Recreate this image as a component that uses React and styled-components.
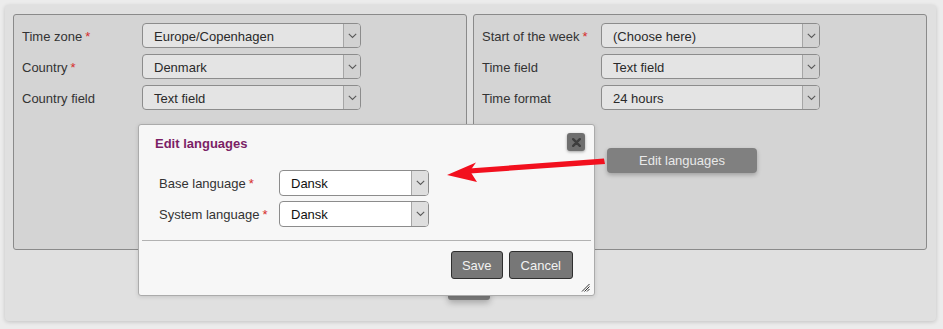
import React from "react";
import styled, { createGlobalStyle } from "styled-components";

const Global = createGlobalStyle`
  html, body { margin: 0; padding: 0; background: #ececec; }
  body { font-family: "Liberation Sans", Arial, sans-serif; font-size: 13px; color: #333; }
  * { box-sizing: border-box; }
`;

const Page = styled.div`
  position: relative;
  width: 943px;
  height: 329px;
  padding: 5px 0 0 5px;
`;

const Panel = styled.div`
  width: 931px;
  background: #e0e0e0;
  border-radius: 4px;
  box-shadow: 0 1px 4px rgba(0, 0, 0, 0.18);
  padding: 9px 10px 21px 8px;
`;

const Columns = styled.div`
  display: grid;
  grid-template-columns: 454px 454px;
  column-gap: 6px;
`;

const FieldBox = styled.div`
  height: 236px;
  background: #d4d4d4;
  border: 1px solid #8a8a8a;
  border-radius: 3px;
  padding: 8px;
  display: flex;
  flex-direction: column;
  gap: 6px;
`;

const Row = styled.div`
  display: grid;
  grid-template-columns: ${(p) => p.$labelWidth || 120}px auto;
  align-items: center;
  justify-content: start;
`;

const Label = styled.span`
  color: #333;
  font-size: 13px;
  white-space: nowrap;
  padding-top: 1px;
`;

const Req = styled.span`
  color: #d62d2d;
  margin-left: 3px;
`;

const SelectBox = styled.div`
  display: flex;
  width: ${(p) => p.$width}px;
  height: ${(p) => p.$height}px;
  border: 1px solid #8c8c8c;
  border-radius: 4px;
  background: ${(p) => (p.$light ? "#ffffff" : "#e4e4e4")};
  overflow: hidden;
`;

const SelectValue = styled.span`
  flex: 1;
  display: flex;
  align-items: center;
  padding-left: 11px;
  padding-top: 1px;
  color: ${(p) => (p.$light ? "#111" : "#2a2a2a")};
  font-size: 13px;
`;

const SelectArrow = styled.span`
  width: 17px;
  border-left: 1px solid #a6a6a6;
  background: ${(p) => (p.$light ? "#dedede" : "#d2d2d2")};
  display: flex;
  align-items: center;
  justify-content: center;
`;

const Chevron = () => (
  <svg width="9" height="6" viewBox="0 0 9 6">
    <polyline points="0.8,0.8 4.5,4.5 8.2,0.8" fill="none" stroke="#5a5a5a" strokeWidth="1.1" />
  </svg>
);

const Select = ({ value, width = 219, height = 25, light }) => (
  <SelectBox $width={width} $height={height} $light={light}>
    <SelectValue $light={light}>{value}</SelectValue>
    <SelectArrow $light={light}>
      <Chevron />
    </SelectArrow>
  </SelectBox>
);

const Field = ({ label, required, value, labelWidth, ...rest }) => (
  <Row $labelWidth={labelWidth}>
    <Label>
      {label}
      {required && <Req>*</Req>}
    </Label>
    <Select value={value} {...rest} />
  </Row>
);

const EditRow = styled.div`
  margin-top: 32px;
  padding-left: 125px;
`;

const GreyButton = styled.button`
  width: 150px;
  height: 25px;
  border: none;
  border-radius: 4px;
  background: #808080;
  color: #e9e9e9;
  font-family: "Liberation Sans", Arial, sans-serif;
  font-size: 13px;
  box-shadow: 0 2px 4px rgba(0, 0, 0, 0.25);
  padding: 0;
`;

const Footer = styled.div`
  display: flex;
  justify-content: center;
  margin-top: 24px;
  padding-right: 1px;
`;

const MainButton = styled.button`
  width: 42px;
  height: 26px;
  border: none;
  border-radius: 3px;
  background: #777;
  box-shadow: 0 3px 6px rgba(0, 0, 0, 0.25);
`;

const Dialog = styled.div`
  position: absolute;
  left: 138px;
  top: 124px;
  width: 457px;
  height: 172px;
  background: #f7f7f7;
  border: 1px solid #ababab;
  border-radius: 3px;
  box-shadow: 0 1px 4px rgba(0, 0, 0, 0.12);
  display: flex;
  flex-direction: column;
`;

const DialogHeader = styled.div`
  display: flex;
  justify-content: space-between;
  align-items: flex-start;
  padding: 10px 9px 0 16px;
  height: 45px;
`;

const DialogTitle = styled.h2`
  margin: 0;
  font-size: 13px;
  font-weight: bold;
  line-height: 16px;
  color: #7b1f66;
  padding-top: 1px;
`;

const CloseButton = styled.button`
  width: 18px;
  height: 18px;
  margin-top: -2px;
  border: none;
  border-radius: 3px;
  background: #6f6f6f;
  box-shadow: 0 1px 3px rgba(0, 0, 0, 0.35);
  display: flex;
  align-items: center;
  justify-content: center;
  padding: 0;
`;

const DialogBody = styled.div`
  padding: 0 0 0 20px;
  display: flex;
  flex-direction: column;
  gap: 5px;
  height: 70px;
`;

const Separator = styled.hr`
  margin: 0 3px;
  border: none;
  border-top: 1px solid #b2b2b2;
`;

const DialogFooter = styled.div`
  position: relative;
  flex: 1;
  display: flex;
  justify-content: flex-end;
  align-items: flex-start;
  gap: 6px;
  padding: 10px 21px 0 0;
`;

const DarkButton = styled.button`
  height: 28px;
  padding: 0 ${(p) => p.$pad}px;
  border: 1px solid #2f2f2f;
  border-radius: 3px;
  background: #777;
  color: #f2f2f2;
  font-family: "Liberation Sans", Arial, sans-serif;
  font-size: 13px;
`;

const Grip = styled.svg`
  position: absolute;
  right: 4px;
  bottom: 3px;
`;

const ArrowOverlay = styled.svg`
  position: absolute;
  left: 0;
  top: 0;
  pointer-events: none;
`;

export default function App() {
  return (
    <>
      <Global />
      <Page>
        <Panel>
          <Columns>
            <FieldBox>
              <Field label="Time zone" required value="Europe/Copenhagen" />
              <Field label="Country" required value="Denmark" />
              <Field label="Country field" value="Text field" />
            </FieldBox>
            <FieldBox>
              <Field label="Start of the week" required value="(Choose here)" labelWidth={119} />
              <Field label="Time field" value="Text field" labelWidth={119} />
              <Field label="Time format" value="24 hours" labelWidth={119} />
              <EditRow>
                <GreyButton>Edit languages</GreyButton>
              </EditRow>
            </FieldBox>
          </Columns>
          <Footer>
            <MainButton />
          </Footer>
        </Panel>

        <Dialog>
          <DialogHeader>
            <DialogTitle>Edit languages</DialogTitle>
            <CloseButton aria-label="close">
              <svg width="9" height="9" viewBox="0 0 9 9">
                <path d="M1.2 1.2 L7.8 7.8 M7.8 1.2 L1.2 7.8" stroke="#3e3e3e" strokeWidth="2.4" strokeLinecap="round" />
              </svg>
            </CloseButton>
          </DialogHeader>
          <DialogBody>
            <Field label="Base language" required value="Dansk" width={150} height={26} light />
            <Field label="System language" required value="Dansk" width={150} height={26} light />
          </DialogBody>
          <Separator />
          <DialogFooter>
            <DarkButton $pad={10}>Save</DarkButton>
            <DarkButton $pad={11}>Cancel</DarkButton>
            <Grip width="9" height="9" viewBox="0 0 9 9">
              <path d="M8.5 1 L1 8.5 M8.5 3.5 L3.5 8.5 M8.5 6 L6 8.5" stroke="#333" strokeWidth="1" />
            </Grip>
          </DialogFooter>
        </Dialog>

        <ArrowOverlay width="943" height="329" viewBox="0 0 943 329">
          <path d="M604 158.5 L605 164 L470 173.5 L469 168.5 Z" fill="#f2101e" />
          <polygon points="447,175 476,162.5 470,171 477,182" fill="#f2101e" />
        </ArrowOverlay>
      </Page>
    </>
  );
}
